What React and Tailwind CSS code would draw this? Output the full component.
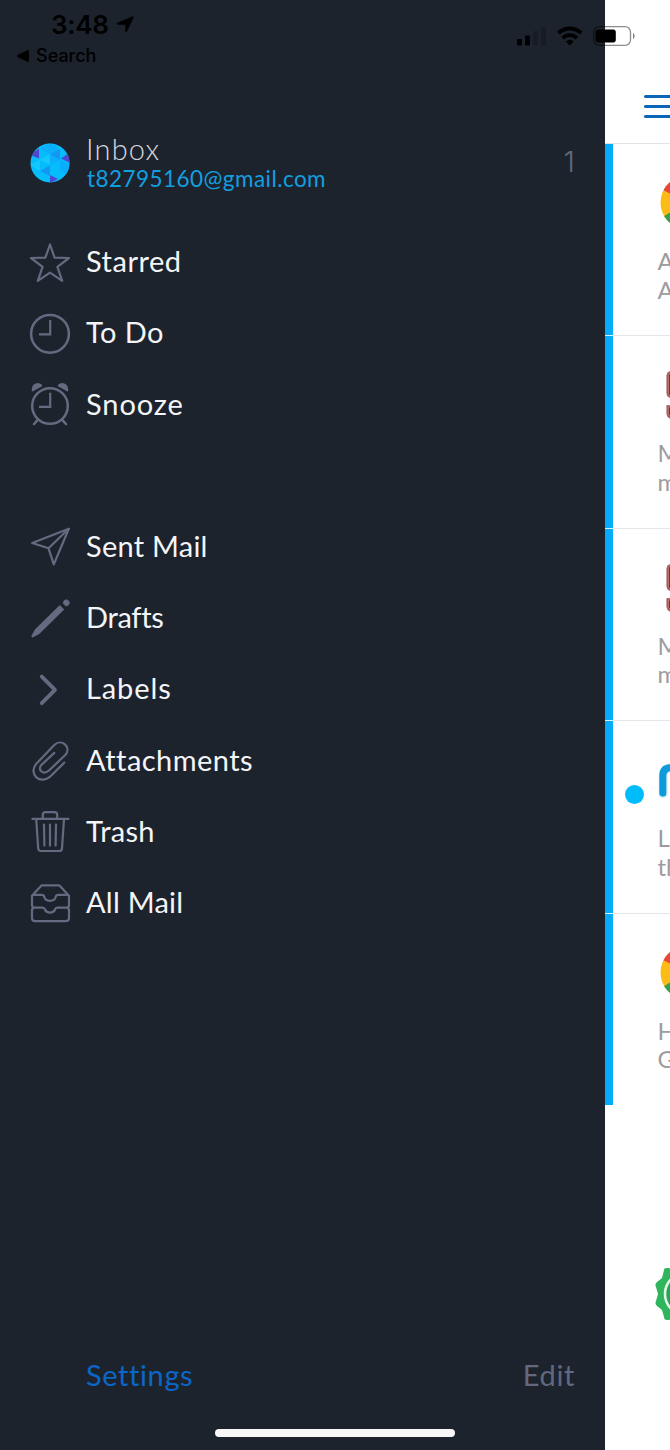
const Icon = ({ children }) => (
    <svg
        width="44"
        height="44"
        viewBox="0 0 44 44"
        fill="none"
        stroke="currentColor"
        strokeWidth="2.2"
        strokeLinecap="round"
        strokeLinejoin="round"
        className="shrink-0 text-[#646a7f]"
    >
        {children}
    </svg>
);

const StarIcon = () => (
    <Icon>
        <path d="M22 3.5 26.6 16.6 41 17 29.4 25.8 34.2 39.8 22 31.6 9.8 39.8 14.6 25.8 3 17 17.4 16.6Z" />
    </Icon>
);

const ClockIcon = () => (
    <Icon>
        <circle cx="22" cy="21.8" r="18.9" strokeWidth="2.5" />
        <path d="M22.2 8V22.4H11" strokeLinecap="butt" strokeLinejoin="miter" />
    </Icon>
);

const AlarmIcon = () => (
    <Icon>
        <circle cx="22" cy="23" r="17.8" strokeWidth="2.5" />
        <path d="M22.2 9.8V23.8H11" strokeLinecap="butt" strokeLinejoin="miter" />
        <path d="M9.8 36.8 6 41M34.2 36.8 38 41" strokeWidth="2.6" />
        <path d="M4.6 8.4Q3.2 8.6 4 5.2A5.8 5.8 0 0 1 13.6 1.6Q15 3.4 13.2 3.8ZM39.4 8.4Q40.8 8.6 40 5.2A5.8 5.8 0 0 0 30.4 1.6Q29 3.4 30.8 3.8Z" fill="currentColor" stroke="none" />
    </Icon>
);

const SendIcon = () => (
    <Icon>
        <path d="M40.8 3.8 4.2 18 20.5 23.3 25.8 39.4Z" />
        <path d="M40.8 3.8 20.5 23.3" />
    </Icon>
);

const PencilIcon = () => (
    <Icon>
        <path d="M35.2 6.4A3.1 3.1 0 1 1 37.8 9Z" fill="currentColor" stroke="currentColor" strokeWidth="0.6" />
        <path d="M31.8 8 36.2 12.4 11.3 37 4.8 40.4Q3 40.6 3.5 38.7L6.9 32.5Z" fill="currentColor" stroke="none" />
    </Icon>
);

const ChevronIcon = () => (
    <Icon>
        <path d="M13.8 8.6 27 21.9 13.8 35.2" strokeWidth="3.8" />
    </Icon>
);

const ClipIcon = () => (
    <Icon>
        <path d="M36.3 23.6 21.5 38.2C12 45.5 0.5 35.5 7.8 25.3L26.3 6C33.5 -1 43.8 8 37.5 15.8L21 31.5C15 36.5 9 30.5 13.5 25.8L26.3 13.9" />
    </Icon>
);

const TrashIcon = () => (
    <Icon>
        <path d="M4.4 8.9H40.4M14.8 8.5V4.8Q14.8 2.2 17.4 2.2H26.6Q29.2 2.2 29.2 4.8V8.5M8.2 9 10.2 38.3Q10.4 41 13 41H31.2Q33.8 41 34 38.3L36 9M16 14.6 16.4 35.6M22 14.6V35.6M28 14.6 27.6 35.6" />
    </Icon>
);

const TrayIcon = () => (
    <Icon>
        <path d="M4 14.8 13.5 4.4H31.5L41 14.8V24Q41 26.7 38.5 26.7Q41 26.7 41 29.4V37Q41 40.2 37.8 40.2H7.2Q4 40.2 4 37V29.4Q4 26.7 6.5 26.7Q4 26.7 4 24ZM4.8 13.9H13.5Q16 13.9 16.4 16.1C17.4 21 26.6 21 27.6 16.1Q28 13.9 30.5 13.9H40.2M5.8 26.7H14.5Q16.5 26.7 17 28.5C18.5 32.6 25.5 32.6 27 28.5Q27.5 26.7 29.5 26.7H39.2" />
    </Icon>
);

const FOLDERS = [
    { label: "Starred", icon: StarIcon, spacing: "tracking-[0.5px]" },
    { label: "To Do", icon: ClockIcon, spacing: "tracking-[0.4px]" },
    { label: "Snooze", icon: AlarmIcon, spacing: "tracking-[0.9px]" },
    null,
    { label: "Sent Mail", icon: SendIcon, spacing: "tracking-[0.25px]" },
    { label: "Drafts", icon: PencilIcon, spacing: "tracking-[-0.3px]" },
    { label: "Labels", icon: ChevronIcon, spacing: "tracking-[0.9px]" },
    { label: "Attachments", icon: ClipIcon, spacing: "tracking-[0.45px]" },
    { label: "Trash", icon: TrashIcon, spacing: "tracking-[0.25px]" },
    { label: "All Mail", icon: TrayIcon, spacing: "tracking-[0.25px]" },
];

const ChromeLogo = () => (
    <svg width="54" height="54" viewBox="0 0 54 54" className="ml-[3px] mt-[31px] shrink-0">
        <circle cx="27" cy="27.5" r="26.5" fill="#fbbc15" />
        <path d="M27 27.5 3.5 15.2A26.5 26.5 0 0 1 50.5 15.2Z" fill="#e8453c" />
        <path d="M27 27.5 4 41A26.5 26.5 0 0 0 27 54Z" fill="#34a04c" />
        <path d="M3.4 15.2 14 34 4 41Z" fill="#fbbc15" />
        <circle cx="27" cy="27.5" r="12" fill="#4285f4" stroke="#fff" strokeWidth="3" />
    </svg>
);

const RedLogo = () => (
    <svg width="54" height="54" viewBox="0 0 54 54" className="ml-[9px] mt-[31px] shrink-0">
        <rect x="0.9" y="4.5" width="40" height="26" rx="4" fill="#a04b4b" stroke="#b96d6d" />
        <rect x="2.4" y="6" width="38" height="23" rx="2.5" fill="#8c2628" stroke="#cf9393" strokeWidth="0.7" />
        <path d="M0.9 38.5H40V51.5H5.5Q0.9 51 0.9 46Z" fill="#a04b4b" stroke="#b96d6d" />
        <path d="M2.4 40H40V50H6.5Q2.4 49.5 2.4 46Z" fill="#8c2628" stroke="#cf9393" strokeWidth="0.7" />
    </svg>
);

const BlueLogo = () => (
    <svg width="54" height="54" viewBox="0 0 54 54" className="ml-px mt-[31px] shrink-0">
        <path d="M5.2 41.5V24Q5.2 16 13 16H30" fill="none" stroke="#cfe9f4" strokeWidth="9" strokeLinecap="round" />
        <path d="M4.8 41V24Q4.8 15.8 13 15.8H30" fill="none" stroke="#0d9bdc" strokeWidth="7" strokeLinecap="round" />
    </svg>
);

const MAILS = [
    { logo: ChromeLogo, lines: ["A", "A"] },
    { logo: RedLogo, lines: ["M", "m"] },
    { logo: RedLogo, lines: ["M", "m"] },
    { logo: BlueLogo, lines: ["L", "th"], unread: true },
    { logo: ChromeLogo, lines: ["H", "G"] },
];

const StatusBar = () => (
    <div className="absolute inset-x-0 top-0 z-10 h-20 text-black">
        <div className="flex justify-between pl-[51px] pr-[34px]">
            <div className="flex items-start gap-[7px] pt-[9px]">
                <span className="font-['Inter',sans-serif] text-[26px] font-semibold leading-8 tracking-[-0.3px]">3:48</span>
                <svg width="18" height="17" viewBox="0 0 19 18" className="mt-[7px]">
                    <path d="M17.8 0.3Q19 0.2 18.6 1.5L11.5 16.8Q10.3 18.2 9.8 16.2V9.2H2Q0 8.7 1.5 7.2Z" />
                </svg>
            </div>
            <div className="flex items-start pt-[26px]">
                <svg width="30" height="20" viewBox="0 0 30 20">
                    <rect x="0" y="13" width="5" height="6.5" rx="1" />
                    <rect x="8" y="9.5" width="5" height="10" rx="1" />
                    <rect x="16" y="5.3" width="5" height="14.2" rx="1" opacity="0.2" />
                    <rect x="24" y="1.3" width="5" height="18.2" rx="1" opacity="0.2" />
                </svg>
                <svg width="26" height="20" viewBox="0 0 26 20" className="ml-[10px]" fill="none" stroke="currentColor" strokeWidth="3.9">
                    <path d="M1.4 7.2C8 0.9 17.6 0.9 24.2 7.2M5.6 12C9.8 8.2 15.8 8.2 20 12" />
                    <path d="M12.8 19.3 8.9 15.4Q12.8 12.2 16.7 15.4Z" fill="currentColor" stroke="none" />
                </svg>
                <svg width="43" height="20" viewBox="0 0 43 20" className="ml-[10px]">
                    <rect x="0.7" y="0.7" width="36.8" height="18.6" rx="5.2" fill="none" stroke="#000" strokeWidth="1.3" opacity="0.45" />
                    <rect x="2.6" y="3.6" width="20.2" height="12.8" rx="2.6" />
                    <path d="M40 6.5Q43.2 10 40 13.5Z" opacity="0.5" />
                </svg>
            </div>
        </div>
        <div className="-mt-[2px] flex items-center gap-[7px] pl-[17px]">
            <svg width="12" height="12" viewBox="0 0 12 12">
                <path d="M0.6 5.1 10.3 0.3Q12 0 12 1.5V10.5Q12 12 10.3 11.7L0.6 6.9Q-0.4 6 0.6 5.1Z" />
            </svg>
            <span className="font-['Inter',sans-serif] text-[18px] font-medium leading-6">Search</span>
        </div>
    </div>
);

const Sidebar = () => (
    <aside className="flex w-[605px] shrink-0 flex-col bg-[#1c232d]">
        <div className="flex h-[227px] items-start pl-[30px] pr-[30px] pt-[134px]">
            <svg width="40" height="40" viewBox="0 0 40 40" className="mt-[9px] shrink-0">
                <clipPath id="ball">
                    <circle cx="20" cy="20" r="19.5" />
                </clipPath>
                <g clipPath="url(#ball)">
                    <rect width="40" height="40" fill="#06bdfb" />
                    <path d="M20 0 10 6 20 11ZM20 0V11L30 6ZM20 22 30 17 20 11ZM30 17 40 22V33L30 28Z" fill="#0aaefa" />
                    <path d="M10 28 20 22V33ZM30 6 20 11 30 17Z" fill="#1497f3" />
                    <path d="M10 17 20 11 20 22ZM0 22 10 28V17Z" fill="#14c8fc" />
                    <path d="M0 12 9 5.5V15.5ZM31 15.5 40 9V20ZM20 32 28 36 20 40Z" fill="#5046d4" />
                </g>
            </svg>
            <div className="ml-4 grow">
                <div className="text-[29px] font-light leading-[30px] tracking-[1.2px] text-[#d6d7de]">Inbox</div>
                <div className="pl-px text-[22.5px] leading-[29px] tracking-[0.45px] text-[#129fe0]">t82795160@gmail.com</div>
            </div>
            <span className="pt-[10px] font-['Inter',sans-serif] text-[29px] font-light leading-9 text-[#62687d]">1</span>
        </div>

        <nav>
            {FOLDERS.map((folder, i) =>
                folder ? (
                    <div key={i} className="flex h-[71.2px] items-center gap-[14px] pl-7">
                        <folder.icon />
                        <span className={`pb-[2.6px] text-[29px] leading-9 text-[#f4f5f8] ${folder.spacing}`}>{folder.label}</span>
                    </div>
                ) : (
                    <div key={i} className="h-[71.2px]" />
                )
            )}
        </nav>

        <div className="mt-auto flex justify-between pb-[57px] pl-[86px] pr-[30px] text-[29px] leading-9">
            <button className="tracking-[0.6px] text-[#0a66c8]">Settings</button>
            <button className="tracking-[0.6px] text-[#62687d]">Edit</button>
        </div>
    </aside>
);

const MailList = () => (
    <main className="flex min-w-0 grow flex-col overflow-hidden bg-white">
        <header className="flex h-[144px] shrink-0 items-start border-b border-[#e2e3e4] pl-[39px] pt-[95px]">
            <div className="flex w-10 shrink-0 flex-col gap-[7px]">
                <div className="h-[3px] rounded-full bg-[#0b66b8]" />
                <div className="h-[3px] rounded-full bg-[#0b66b8]" />
                <div className="h-[3px] rounded-full bg-[#0b66b8]" />
            </div>
        </header>

        {MAILS.map((mail, i) => (
            <div key={i} className={`flex shrink-0 ${i < 4 ? "h-[192.4px]" : "h-[191.4px]"}`}>
                <div className={`w-2 shrink-0 bg-[#05acfd] ${i < 4 ? "border-b border-[#dff3fd]" : ""}`} />
                <div className={`flex grow ${i < 4 ? "border-b border-[#e6e7e8]" : ""}`}>
                    <div className="w-[44px] shrink-0 pl-[12px] pt-[64px]">
                        {mail.unread && <div className="h-[19px] w-[19px] rounded-full bg-[#00bcfb]" />}
                    </div>
                    <div className="shrink-0">
                        <mail.logo />
                        <div className="mt-[18px] pl-[0.5px] text-[24px] leading-[28.7px] text-[#9c9c9e]">
                            {mail.lines.map((line, n) => (
                                <div key={n}>{line}</div>
                            ))}
                        </div>
                    </div>
                </div>
            </div>
        ))}

        <svg width="54" height="54" viewBox="0 0 54 54" className="ml-[50px] mt-[162px] shrink-0">
            <path d="M9 3Q9 0.5 13 1L20 2 27 0V54L20 52 13 53Q9 53.5 9 50L7 43 2 39Q-0.5 37 1 34L3 27 1 20Q-0.5 17 2 15L7 11Z" fill="#2fb65d" />
            <circle cx="31" cy="27" r="21" fill="#29a35a" stroke="#e3f7e9" strokeWidth="2.6" />
        </svg>
    </main>
);

const App = () => (
    <div className="relative flex h-[1450px] w-[670px] overflow-hidden font-['Lato',sans-serif]">
        <StatusBar />
        <Sidebar />
        <MailList />
        <div className="absolute bottom-[13px] left-[215px] h-2 w-60 rounded-full bg-[#f7f7f7]" />
    </div>
);

export default App;
